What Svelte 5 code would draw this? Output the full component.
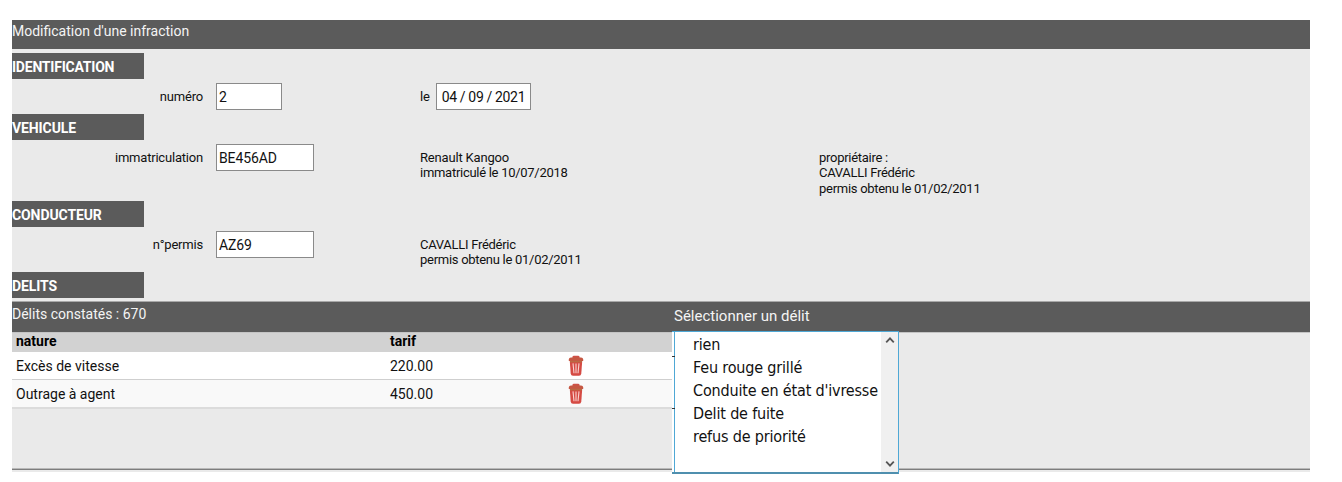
<script>
  const delits = [
    { nature: 'Excès de vitesse', tarif: '220.00' },
    { nature: 'Outrage à agent', tarif: '450.00' }
  ];
  const choix = ['rien', 'Feu rouge grillé', "Conduite en état d'ivresse", 'Delit de fuite', 'refus de priorité'];
</script>

<main>
  <header class="bar title">Modification d'une infraction</header>

  <section class="identification">
    <h2 class="tight">IDENTIFICATION</h2>
    <div class="fields">
      <span class="label">numéro</span>
      <div class="box short">2</div>
      <div class="date"><span class="label">le</span><div class="box day">04 / 09 / 2021</div></div>
    </div>
  </section>

  <section class="vehicule">
    <h2>VEHICULE</h2>
    <div class="fields">
      <span class="label">immatriculation</span>
      <div class="box">BE456AD</div>
      <p><span class="model">Renault Kangoo</span><br />immatriculé le 10/07/2018</p>
      <p>propriétaire :<br />CAVALLI Frédéric<br />permis obtenu le 01/02/2011</p>
    </div>
  </section>

  <section class="conducteur">
    <h2>CONDUCTEUR</h2>
    <div class="fields">
      <span class="label">n°permis</span>
      <div class="box">AZ69</div>
      <p>CAVALLI Frédéric<br />permis obtenu le 01/02/2011</p>
    </div>
  </section>

  <section class="delits">
    <h2>DELITS</h2>
  </section>

  <div class="bar list"><span>Délits constatés : 670</span><span class="pick">Sélectionner un délit</span></div>

  <div class="content">
    <div class="table">
      <div class="row head"><b>nature</b><b>tarif</b></div>
      {#each delits as d}
        <div class="row">
          <span>{d.nature}</span>
          <span>{d.tarif}</span>
          <svg width="16" height="22" viewBox="0 0 16 22">
            <path d="M5 3.5 V2.2 Q5 1.4 6 1.4 H10 Q11 1.4 11 2.2 V3.5" fill="#c65743" stroke="#cf5148" stroke-width="1.2" />
            <path d="M0.8 6 V4.4 Q0.8 2.6 3 2.6 H13 Q15.2 2.6 15.2 4.4 V6 Z" fill="#c65743" />
            <path d="M1.8 6 H14.2 L13.3 18.6 Q13.1 20.8 11 20.8 H5 Q2.9 20.8 2.7 18.6 Z" fill="#d54a43" />
            <path d="M2 6.6 H14" stroke="#b96a43" stroke-width="1.6" />
            <path d="M5 8.4 L6 18.2 M8 8.4 V18.2 M11 8.4 L10 18.2" stroke="#fbd3d0" stroke-width="1.1" />
          </svg>
        </div>
      {/each}
    </div>
    <div class="select">
      <i class="tick first"></i><i class="tick second"></i>
      <ul>
        {#each choix as c}<li>{c}</li>{/each}
      </ul>
      <div class="scroll">
        <svg width="10" height="8" viewBox="0 0 10 8"><path d="M1.2 6.3 L5 2.3 L8.8 6.3" /></svg>
        <svg width="10" height="8" viewBox="0 0 10 8"><path d="M1.2 1.7 L5 5.7 L8.8 1.7" /></svg>
      </div>
    </div>
  </div>
</main>

<style>
  :global(body) { background: #fff; }
  main {
    box-sizing: border-box;
    width: 1298px;
    height: 462px;
    padding-bottom: 10px;
    margin: 20px 0 0 12px;
    background: linear-gradient(#eaeaea, #eaeaea) 0 0 / 100% 452px no-repeat;
    color: #111;
    font: 14px/16px Roboto, sans-serif;
    display: flex;
    flex-direction: column;
    white-space: nowrap;
  }
  .bar { background: #5b5b5b; color: #f4f4f4; }
  .title { height: 29px; padding-top: 3px; box-sizing: border-box; margin-bottom: 4px; }
  section { flex: none; }
  .identification { height: 61px; }
  .vehicule { height: 87px; }
  .conducteur { height: 71px; }
  .delits { height: 29px; }
  h2 {
    margin: 0; width: 132px; height: 26px;
    background: #5b5b5b; color: #fff;
    font-size: 14px; font-weight: 700; line-height: 28px; letter-spacing: -0.1px;
  }
  h2.tight { letter-spacing: -0.22px; }
  .fields {
    display: grid;
    grid-template-columns: 191px 204px 399px 1fr;
    align-items: start;
    padding-top: 4px;
  }
  .label { padding-top: 6px; font-size: 13px; letter-spacing: -0.2px; }
  .fields > .label { text-align: right; }
  .box {
    box-sizing: border-box; width: 98px; height: 27px; margin-left: 13px;
    border: 1px solid #8a8a8a; background: #fff;
    padding-left: 2px; line-height: 26px; letter-spacing: -0.1px;
  }
  .short { width: 66px; }
  .date { display: flex; margin-left: 13px; }
  .date .day { width: 95px; margin-left: 6px; padding-left: 5px; letter-spacing: -0.35px; }
  p { margin: 0 0 0 13px; padding-top: 6px; font-size: 13px; line-height: 15.4px; letter-spacing: -0.28px; }
  .model { letter-spacing: -0.18px; }
  .list { flex: none; height: 31px; box-sizing: border-box; border-top: 1px solid #a8a8a8; display: grid; grid-template-columns: 662px 1fr; padding-top: 4px; }
  .pick { padding-top: 2px; font-size: 15px; }
  .content { position: relative; flex: 1; border-bottom: 1px solid #7d7d7d; margin-bottom: 2px; box-shadow: inset 0 -1px #b9b9b9; border-top: 1px solid #c4c4c4; }
  .table { width: 662px; }
  .row {
    box-sizing: border-box; height: 28px; padding-left: 4px;
    display: grid; grid-template-columns: 374px 178px 1fr; align-items: center;
    background: #fff; border-bottom: 1px solid #cfcfcf; color: #111;
  }
  .row:last-child { background: #f9f9f9; border-bottom: 2px solid #dcdcdc; height: 29px; }
  .row.head { height: 19px; background: #d2d2d2; border: 0; color: #000; padding-bottom: 3px; }
  .select {
    position: absolute; left: 660px; top: -2px; width: 227px; height: 143px;
    box-sizing: border-box; display: flex;
    background: #fff; border: 1px solid #4fa8d5; border-bottom: 2px solid #4f8fae;
    border-left: 0;
    box-shadow: inset 2px 0 #fff, inset 3px 0 #4fa8d5;
  }
  .tick { position: absolute; left: 0; width: 3px; height: 1px; background: #333; }
  .first { top: 24px; }
  .second { top: 76px; }
  ul { flex: 1; min-width: 0; margin: 0; padding: 1px 0 0 21px; list-style: none; font: 16px/23.1px "DejaVu Sans Condensed", "DejaVu Sans", sans-serif; letter-spacing: -0.17px; color: #111; }
  .scroll { flex: none; width: 17px; background: #f0f0f0; display: flex; flex-direction: column; justify-content: space-between; align-items: center; padding: 4px 0; box-sizing: border-box; }
  .scroll path { fill: none; stroke: #555; stroke-width: 1.8; }
</style>
